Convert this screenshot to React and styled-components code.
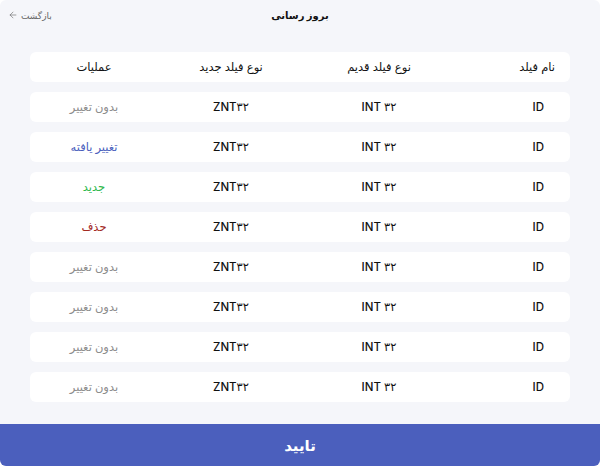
import React from 'react';
import styled, { createGlobalStyle } from 'styled-components';
import { ArrowLeft } from 'lucide-react';

const GlobalStyle = createGlobalStyle`
  html, body {
    margin: 0;
    padding: 0;
    background: #ffffff;
  }
  body {
    font-family: Inter, "DejaVu Sans", "Noto Sans", sans-serif;
  }
`;

const Page = styled.div`
  direction: rtl;
  width: 600px;
  height: 466px;
  display: flex;
  flex-direction: column;
  background-color: #f5f6fa;
  border-radius: 6px;
  overflow: hidden;
`;

const TopBar = styled.div`
  height: 30px;
  display: grid;
  grid-template-columns: 1fr auto 1fr;
  align-items: center;
  padding: 0 8px;
`;

const Title = styled.div`
  grid-column: 2;
  font-size: 10px;
  font-weight: 700;
  color: #111;
`;

const BackLink = styled.button`
  grid-column: 3;
  justify-self: end;
  display: flex;
  align-items: center;
  gap: 3px;
  background: none;
  border: none;
  padding: 0;
  font-family: inherit;
  font-size: 9px;
  color: #666;
  cursor: pointer;
`;

const Content = styled.div`
  flex: 1;
  padding: 22px 30px;
  display: flex;
  flex-direction: column;
  gap: 10px;
`;

const Row = styled.div`
  height: 30px;
  display: grid;
  grid-template-columns: 116px 150px 146px 128px;
  align-items: center;
  background-color: #ffffff;
  border-radius: 6px;
  font-size: 11.5px;
  font-weight: ${props => (props.head ? 400 : 500)};
  color: #111;
`;

const Cell = styled.div`
  text-align: center;
  white-space: nowrap;
  color: ${props => props.color || 'inherit'};
`;

const NameCell = styled(Cell)`
  text-align: right;
  padding-right: ${props => (props.head ? '15px' : '26px')};
`;

const ConfirmButton = styled.button`
  height: 42px;
  border: none;
  background-color: #4b5fbd;
  color: #ffffff;
  font-family: inherit;
  font-size: 15px;
  font-weight: 700;
  cursor: pointer;
`;

const statusColors = {
  'بدون تغییر': '#8c8c8c',
  'تغییر یافته': '#4b5fbd',
  'جدید': '#2eb84b',
  'حذف': '#a32a1f',
};

const rows = [
  'بدون تغییر',
  'تغییر یافته',
  'جدید',
  'حذف',
  'بدون تغییر',
  'بدون تغییر',
  'بدون تغییر',
  'بدون تغییر',
];

const App = () => (
  <>
    <GlobalStyle />
    <Page>
      <TopBar>
        <Title>بروز رسانی</Title>
        <BackLink>
          بازگشت
          <ArrowLeft size={10} strokeWidth={1.5} />
        </BackLink>
      </TopBar>
      <Content>
        <Row head>
          <NameCell head>نام فیلد</NameCell>
          <Cell>نوع فیلد قدیم</Cell>
          <Cell>نوع فیلد جدید</Cell>
          <Cell>عملیات</Cell>
        </Row>
        {rows.map((status, i) => (
          <Row key={i}>
            <NameCell>ID</NameCell>
            <Cell>INT ۳۲</Cell>
            <Cell>ZNT۳۲</Cell>
            <Cell color={statusColors[status]}>{status}</Cell>
          </Row>
        ))}
      </Content>
      <ConfirmButton>تایید</ConfirmButton>
    </Page>
  </>
);

export default App;
